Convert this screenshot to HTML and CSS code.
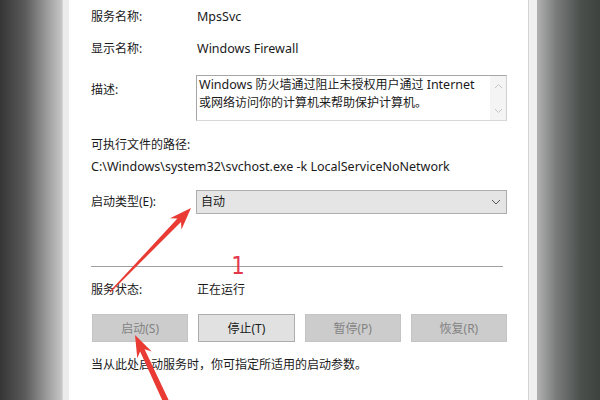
FILE: index.html
```html
<!DOCTYPE html>
<html lang="zh-CN">
<head>
<meta charset="utf-8">
<link rel="stylesheet" href="styles.css">
</head>
<body>
<div class="screen">
  <div class="shade shade-left"></div>
  <div class="edge edge-left"></div>
  <main class="panel">
    <div class="row r1"><span class="label">服务名称:</span><span class="value lat">MpsSvc</span></div>
    <div class="row r2"><span class="label">显示名称:</span><span class="value lat">Windows Firewall</span></div>
    <div class="row r3">
      <span class="label desc-label">描述:</span>
      <div class="textbox">
        <div class="tb-text"><span class="lat">Windows</span> 防火墙通过阻止未授权用户通过 <span class="lat">Internet</span><br>或网络访问你的计算机来帮助保护计算机。</div>
        <div class="tb-scroll">
          <svg width="9" height="6" viewBox="0 0 9 6"><path d="M1 5 L4.5 1.5 L8 5" fill="none" stroke="#c4c4c4" stroke-width="1"/></svg>
          <svg width="9" height="6" viewBox="0 0 9 6"><path d="M1 1 L4.5 4.5 L8 1" fill="none" stroke="#c4c4c4" stroke-width="1"/></svg>
        </div>
      </div>
    </div>
    <div class="line r4">可执行文件的路径:</div>
    <div class="line r5 lat">C:\Windows\system32\svchost.exe -k LocalServiceNoNetwork</div>
    <div class="row r6">
      <span class="label">启动类型(E):</span>
      <div class="select">
        <span>自动</span>
        <svg width="10" height="6" viewBox="0 0 10 6"><path d="M1 1 L5 5 L9 1" fill="none" stroke="#555" stroke-width="1"/></svg>
      </div>
    </div>
    <div class="sep"></div>
    <div class="row r8"><span class="label">服务状态:</span><span class="value">正在运行</span></div>
    <div class="buttons">
      <div class="btn disabled">启动(S)</div>
      <div class="btn">停止(T)</div>
      <div class="btn disabled">暂停(P)</div>
      <div class="btn disabled">恢复(R)</div>
    </div>
    <div class="line hint">当从此处启动服务时，你可指定所适用的启动参数。</div>
  </main>
  <div class="edge edge-right"></div>
  <div class="shade shade-right"></div>

  <div class="mark">1</div>
  <svg class="arrows" width="600" height="400" viewBox="0 0 600 400">
    <polygon fill="#e93a34" points="191,208 181.5,229.4 181,222 110.4,292.4 109.6,291.6 177.4,218.5 170,218.3"/>
    <polygon fill="#e93a34" points="135,335 151.7,351.4 144.6,349.3 172.7,408.7 167.3,411.3 140.1,351.4 137.3,358.3"/>
  </svg>
</div>
</body>
</html>
```
FILE: styles.css
```css
* { box-sizing: border-box; }
html, body { margin: 0; padding: 0; }
body {
  width: 600px;
  height: 400px;
  overflow: hidden;
  font-family: "Noto Sans", "Noto Sans CJK SC", sans-serif;
  font-size: 12px;
  color: #1a1a1a;
}
.lat { font-size: 12.5px; }
.screen {
  position: relative;
  display: flex;
  width: 600px;
  height: 400px;
}
.shade-left {
  width: 62px;
  background: linear-gradient(to right, #353535 0%, #5a5a5a 40%, #9a9a9a 75%, #c6c6c6 100%);
}
.edge-left {
  width: 7px;
  background: #ececec;
  border-left: 1px solid #d6d6d6;
}
.panel {
  width: 459px;
  background: #fff;
  padding: 8px 21px 0 22px;
  display: flex;
  flex-direction: column;
}
.edge-right {
  width: 9px;
  background: #f0f0f0;
  border-left: 1px solid #d4d4d4;
}
.shade-right {
  flex: 1;
  background: linear-gradient(to right, #b2b2b2 0%, #7a7c7b 30%, #4a4f4c 70%, #3c423e 100%);
}
.row {
  display: grid;
  grid-template-columns: 105px 1fr;
  align-items: start;
  line-height: 18px;
}
.value { padding-left: 1px; }
.r2 { margin-top: 14px; }
.r3 { margin-top: 17px; }
.desc-label { margin-top: 6px; }
.textbox {
  height: 46px;
  border: 1px solid #a6a6a6;
  border-right-color: #d0d0d0;
  border-bottom-color: #d8d8d8;
  display: flex;
}
.tb-text {
  flex: 1;
  padding: 0 4px 0 2px;
  line-height: 18px;
  white-space: nowrap;
}
.tb-scroll {
  width: 16px;
  background: #f4f4f4;
  display: flex;
  flex-direction: column;
  align-items: center;
  justify-content: space-between;
  padding: 7px 0 6px;
}
.line { line-height: 18px; }
.r4 { margin-top: 15px; }
.r5 { margin-top: 4px; }
.r6 { margin-top: 14px; align-items: center; }
.select {
  height: 24px;
  border: 1px solid #adadad;
  background: #e5e5e5;
  display: flex;
  align-items: center;
  justify-content: space-between;
  padding: 0 5px 0 4px;
}
.sep {
  margin-top: 52px;
  height: 1px;
  width: 412px;
  background: #a0a0a0;
}
.r8 { margin-top: 14px; }
.buttons {
  margin-top: 15px;
  margin-left: 1px;
  display: grid;
  grid-template-columns: repeat(4, 1fr);
  gap: 10px;
}
.btn {
  height: 28px;
  border: 1px solid #adadad;
  background: #e1e1e1;
  display: flex;
  align-items: center;
  justify-content: center;
}
.btn.disabled {
  background: #cccccc;
  border-color: #c4c4c4;
  color: #838383;
}
.hint { margin-top: 14px; }
.mark {
  position: absolute;
  left: 230px;
  top: 251px;
  font-family: "DejaVu Sans", sans-serif;
  font-size: 25px;
  line-height: 30px;
  color: #e2384c;
  transform: scaleX(0.85);
}
.arrows {
  position: absolute;
  left: 0;
  top: 0;
  pointer-events: none;
}
```
